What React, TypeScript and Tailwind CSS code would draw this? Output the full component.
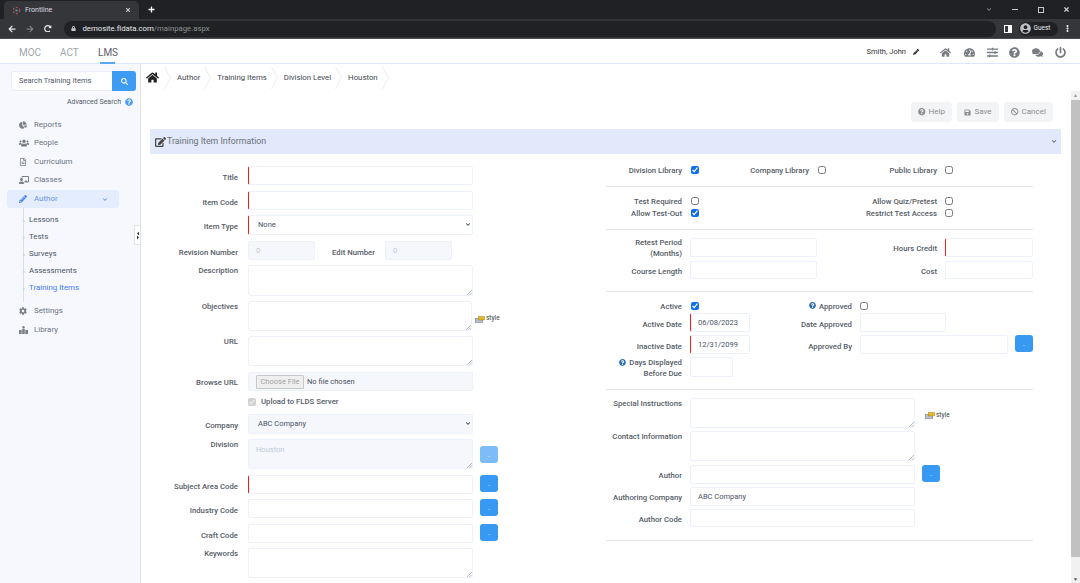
import React from "react";
import {
  FaHome, FaTachometerAlt, FaSlidersH, FaQuestionCircle, FaComments, FaPowerOff, FaChartPie, FaUsers,
  FaRegFileAlt, FaChalkboardTeacher, FaPencilAlt, FaCog, FaEdit, FaSave, FaBan, FaSearch,
  FaChevronDown, FaLock, FaArrowLeft, FaArrowRight, FaRedoAlt, FaUserCircle, FaTimes, FaPlus, FaEllipsisV,
} from "react-icons/fa";

const font = "font-['Roboto','Liberation_Sans',sans-serif]";

function Grip() {
  return (
    <svg className="absolute right-[1px] bottom-[1px] w-[5px] h-[5px]" viewBox="0 0 5 5">
      <path d="M0 5L5 0M2.5 5L5 2.5" stroke="#8a8f98" strokeWidth="0.6" />
    </svg>
  );
}

function Input({ w, req, disabled, value, cls = "" }: { w: string; req?: boolean; disabled?: boolean; value?: string; cls?: string }) {
  return (
    <input
      readOnly
      value={value ?? ""}
      className={`${w} h-full shrink-0 box-border rounded-[2px] border border-[#edf1fb] ${req ? "border-l-[#f01c1c]" : ""} ${disabled ? "bg-[#f5f7fd] text-[#c3c9d6] border-[#e8edf9]" : "bg-white text-[#4a5366]"} px-[7px] text-[7.5px] outline-none ${cls}`}
    />
  );
}

function Area({ w = "w-[225px]", value, disabled }: { w?: string; value?: string; disabled?: boolean }) {
  return (
    <div className={`relative ${w} h-full shrink-0`}>
      <textarea
        readOnly
        value={value ?? ""}
        className={`block w-full h-full box-border resize-none rounded-[2px] border border-[#edf1fb] ${disabled ? "bg-[#f5f7fd] text-[#c3c9d6]" : "bg-white"} px-[7px] py-[4px] text-[7.5px] outline-none`}
      />
      <Grip />
    </div>
  );
}

function Dots({ faded, cls = "" }: { faded?: boolean; cls?: string }) {
  return (
    <button className={`block self-start shrink-0 w-[18px] h-[17px] rounded-[3px] ${faded ? "bg-[#7dbcf7]" : "bg-[#3899f2]"} text-white text-[6px] leading-[17px] text-center ${cls}`}>..</button>
  );
}

function Lbl({ children, w = "w-[88px]", top, cls = "" }: { children: React.ReactNode; w?: string; top?: boolean; cls?: string }) {
  return (
    <label className={`${w} shrink-0 text-right text-[7.75px] leading-[11px] font-medium text-[#565c66] ${top ? "self-start" : ""} ${cls}`}>
      {children}
    </label>
  );
}

function StyleLink({ cls = "" }: { cls?: string }) {
  return (
    <span className={`flex items-center gap-[1px] text-[6.5px] text-[#3b3b3b] ${cls}`}>
      <svg className="w-[10px] h-[7px]" viewBox="0 0 10 7">
        <rect x="0.5" y="2.5" width="7" height="4.5" fill="#b9c2cc" stroke="#5f6b78" strokeWidth="0.5" />
        <rect x="3.5" y="0.5" width="6" height="3.5" fill="#e5b92c" stroke="#8a6d10" strokeWidth="0.4" />
      </svg>
      style
    </span>
  );
}

function Check({ checked, disabled }: { checked?: boolean; disabled?: boolean }) {
  return (
    <input
      type="checkbox"
      readOnly
      checked={!!checked}
      disabled={disabled}
      className="w-[8px] h-[8px] m-0 accent-[#0f6fe8]"
    />
  );
}

function Help({ cls = "" }: { cls?: string }) {
  return <FaQuestionCircle className={`inline text-[#2f6fb5] w-[7px] h-[7px] ${cls}`} />;
}

function Divider({ cls }: { cls: string }) {
  return <hr className={`border-0 h-[1px] bg-[#e3e4e6] ${cls}`} />;
}

function Row({ cls, children }: { cls: string; children: React.ReactNode }) {
  return <div className={`flex items-center ${cls}`}>{children}</div>;
}

function LeftForm() {
  const g = "gap-[10px] ";
  return (
    <div className="w-[350px] shrink-0">
      <Row cls={g + "h-[19px]"}><Lbl cls="pt-[3px]">Title</Lbl><Input w="w-[225px]" req /></Row>
      <Row cls={g + "h-[19px] mt-[6px]"}><Lbl cls="pt-[3px]">Item Code</Lbl><Input w="w-[225px]" req /></Row>
      <Row cls={g + "h-[20px] mt-[5px]"}>
        <Lbl cls="pt-[3px]">Item Type</Lbl>
        <div className="relative w-[225px] h-full">
          <select className="block w-full h-full box-border appearance-none rounded-[2px] border border-[#edf1fb] border-l-[#f01c1c] bg-white px-[9px] text-[7.5px] text-[#4a5366] outline-none"><option>None</option></select>
          <FaChevronDown className="absolute right-[2px] top-[7px] w-[6px] h-[5px] text-[#2d3a55]" />
        </div>
      </Row>
      <Row cls={g + "h-[19px] mt-[6px]"}>
        <Lbl cls="pt-[3px]">Revision Number</Lbl>
        <Input w="w-[67px]" disabled value="0" />
        <Lbl w="w-[43px]" cls="pt-[3px] ml-[7px] whitespace-nowrap">Edit Number</Lbl>
        <Input w="w-[67px]" disabled value="0" />
      </Row>
      <Row cls={g + "h-[31px] mt-[5px]"}><Lbl top>Description</Lbl><Area /></Row>
      <Row cls={g + "h-[30px] mt-[5px]"}>
        <Lbl top>Objectives</Lbl>
        <Area w="w-[224px]" />
        <StyleLink cls="-ml-[7px] pt-[6px]" />
      </Row>
      <Row cls={g + "h-[30px] mt-[5px]"}><Lbl top>URL</Lbl><Area /></Row>
      <Row cls={g + "h-[19px] mt-[6px]"}>
        <Lbl cls="pt-[2px]">Browse URL</Lbl>
        <div className="w-[225px] h-full box-border rounded-[2px] border border-[#edf1fb] bg-[#f5f7fd] pl-[7px] flex items-center text-[7.5px] text-[#4a4f59]">
          <span className="h-[14px] w-[48px] box-border border border-[#c9c9c9] rounded-[1px] bg-[#efefef] text-[#a3a3a3] text-center leading-[12px]">Choose File</span>
          <span className="ml-[3px]">No file chosen</span>
        </div>
      </Row>
      <Row cls={g + "h-[12px] mt-[5px]"}>
        <span className="w-[88px]" />
        <span className="flex items-center gap-[5px] text-[7.75px] font-medium text-[#565c66]">
          <Check checked disabled /> Upload to FLDS Server
        </span>
      </Row>
      <Row cls={g + "h-[20px] mt-[6px]"}>
        <Lbl cls="pt-[3px]">Company</Lbl>
        <div className="relative w-[225px] h-full">
          <select className="block w-full h-full box-border appearance-none rounded-[2px] border border-[#edf1fb] bg-[#f5f7fd] px-[9px] text-[7.5px] text-[#4a5366] outline-none"><option>ABC Company</option></select>
          <FaChevronDown className="absolute right-[2px] top-[7px] w-[6px] h-[5px] text-[#2d3a55]" />
        </div>
      </Row>
      <Row cls={g + "h-[30px] mt-[5px]"}>
        <Lbl top>Division</Lbl>
        <Area value="Houston" disabled />
        <Dots faded cls="-ml-[3px] mt-[7px]" />
      </Row>
      <Row cls={g + "h-[19px] mt-[6px]"}><Lbl cls="pt-[3px]">Subject Area Code</Lbl><Input w="w-[225px]" req /><Dots cls="-ml-[3px]" /></Row>
      <Row cls={g + "h-[19px] mt-[5px]"}><Lbl cls="pt-[3px]">Industry Code</Lbl><Input w="w-[225px]" /><Dots cls="-ml-[3px]" /></Row>
      <Row cls={g + "h-[19px] mt-[6px]"}><Lbl cls="pt-[3px]">Craft Code</Lbl><Input w="w-[225px]" /><Dots cls="-ml-[3px]" /></Row>
      <Row cls={g + "h-[30px] mt-[5px]"}><Lbl top>Keywords</Lbl><Area /></Row>
    </div>
  );
}

function RightForm() {
  const Gap = () => <span className="w-[8px] shrink-0" />;
  return (
    <div className="w-[427px] ml-[106px] shrink-0">
      <Row cls="h-[10px] mt-[-1px]">
        <Lbl w="w-[76px]">Division Library</Lbl>
        <span className="ml-[9px] flex"><Check checked /></span>
        <Lbl w="w-[110px]">Company Library</Lbl>
        <span className="ml-[9px] flex"><Check /></span>
        <Lbl w="w-[111px]">Public Library</Lbl>
        <span className="ml-[8px] flex"><Check /></span>
      </Row>
      <Divider cls="mt-[11px]" />
      <Row cls="h-[10px] mt-[9px]">
        <Lbl w="w-[76px]">Test Required</Lbl>
        <span className="ml-[9px] flex"><Check /></span>
        <Lbl w="w-[238px]">Allow Quiz/Pretest</Lbl>
        <span className="ml-[8px] flex"><Check /></span>
      </Row>
      <Row cls="h-[10px] mt-[2px]">
        <Lbl w="w-[76px]">Allow Test-Out</Lbl>
        <span className="ml-[9px] flex"><Check checked /></span>
        <Lbl w="w-[238px]">Restrict Test Access</Lbl>
        <span className="ml-[8px] flex"><Check /></span>
      </Row>
      <Divider cls="mt-[11px]" />
      <Row cls="h-[19px] mt-[8px]">
        <Lbl w="w-[76px]" cls="pt-[1px]">Retest Period (Months)</Lbl>
        <Gap />
        <Input w="w-[127px]" />
        <Lbl w="w-[120px]" cls="pt-[2px]">Hours Credit</Lbl>
        <Gap />
        <Input w="w-[88px]" req />
      </Row>
      <Row cls="h-[18px] mt-[4px]">
        <Lbl w="w-[76px]" cls="pt-[2px]">Course Length</Lbl>
        <Gap />
        <Input w="w-[127px]" />
        <Lbl w="w-[120px]" cls="pt-[2px]">Cost</Lbl>
        <Gap />
        <Input w="w-[88px]" />
      </Row>
      <Divider cls="mt-[12px]" />
      <Row cls="h-[10px] mt-[9px]">
        <Lbl w="w-[76px]">Active</Lbl>
        <span className="ml-[9px] flex"><Check checked /></span>
        <Lbl w="w-[153px]"><Help cls="mr-[3px] align-[-0.5px]" />Approved</Lbl>
        <span className="ml-[8px] flex"><Check /></span>
      </Row>
      <Row cls="h-[19px] mt-[2px]">
        <Lbl w="w-[76px]" cls="pt-[3px]">Active Date</Lbl>
        <Gap />
        <Input w="w-[60px]" req value="06/08/2023" />
        <Lbl w="w-[102px]" cls="pt-[3px]">Date Approved</Lbl>
        <Gap />
        <Input w="w-[86px]" />
      </Row>
      <Row cls="h-[19px] mt-[3px]">
        <Lbl w="w-[76px]" cls="pt-[3px]">Inactive Date</Lbl>
        <Gap />
        <Input w="w-[60px]" req value="12/31/2099" />
        <Lbl w="w-[102px]" cls="pt-[3px]">Approved By</Lbl>
        <Gap />
        <Input w="w-[148px]" />
        <Dots cls="ml-[7px]" />
      </Row>
      <Row cls="h-[20px] mt-[3px]">
        <Lbl w="w-[76px]" cls="pt-[2px]"><Help cls="mr-[3px] align-[-0.5px]" />Days Displayed Before Due</Lbl>
        <Gap />
        <Input w="w-[43px]" />
      </Row>
      <Divider cls="mt-[12px]" />
      <Row cls="h-[30px] mt-[8px]">
        <Lbl w="w-[76px]" top>Special Instructions</Lbl>
        <Gap />
        <Area />
        <StyleLink cls="ml-[10px] pt-[5px]" />
      </Row>
      <Row cls="h-[30px] mt-[3px]">
        <Lbl w="w-[76px]" top>Contact Information</Lbl>
        <Gap />
        <Area />
      </Row>
      <Row cls="h-[19px] mt-[4px]">
        <Lbl w="w-[76px]" cls="pt-[2px]">Author</Lbl>
        <Gap />
        <Input w="w-[225px]" />
        <Dots cls="ml-[7px]" />
      </Row>
      <Row cls="h-[19px] mt-[3px]">
        <Lbl w="w-[76px]" cls="pt-[2px]">Authoring Company</Lbl>
        <Gap />
        <Input w="w-[225px]" value="ABC Company" />
      </Row>
      <Row cls="h-[18px] mt-[3px]">
        <Lbl w="w-[76px]" cls="pt-[3px]">Author Code</Lbl>
        <Gap />
        <Input w="w-[225px]" />
      </Row>
      <Divider cls="mt-[13px]" />
    </div>
  );
}

function SideItem({ icon, label, cls = "" }: { icon: React.ReactNode; label: string; cls?: string }) {
  return (
    <div className={`flex items-center h-[18.5px] pl-[19px] text-[7.9px] text-[#6b7280] ${cls}`}>
      <span className="w-[15px] flex">{icon}</span>
      {label}
    </div>
  );
}

function SubItem({ label, active }: { label: string; active?: boolean }) {
  return (
    <div className={`flex items-center h-[17px] text-[7.9px] ${active ? "text-[#3f7cf5]" : "text-[#4b5563]"}`}>
      <span className="w-[6px] text-[6px] text-[#9db4d8] -ml-[1px]">›</span>
      {label}
    </div>
  );
}

function Chev() {
  return (
    <svg className="absolute right-[-3px] top-[2.5px] w-[7px] h-[22px]" viewBox="0 0 7 22" fill="none">
      <path d="M0.5 0L6.5 11L0.5 22" stroke="#e8e8e8" strokeWidth="0.8" />
    </svg>
  );
}

function Crumb({ label }: { label: string }) {
  return (
    <span className="relative flex items-center h-[27px] pl-[9px] pr-[8px] text-[7.8px] text-[#3f4650]">
      {label}
      <Chev />
    </span>
  );
}

function ActionBtn({ icon, label, cls }: { icon: React.ReactNode; label: string; cls: string }) {
  return (
    <span className={`flex items-center justify-center gap-[3px] h-[20px] rounded-[3px] bg-[#f3f4f6] text-[8px] text-[#8d8d8d] ${cls}`}>
      {icon}{label}
    </span>
  );
}

export default function App() {
  const ic = "w-[8px] h-[8px] text-[#7b8088]";
  const icw = "w-[10px] h-[8px] text-[#7b8088]";
  const hd = "w-[11px] h-[11px] text-[#777c83]";
  return (
    <div className={`w-[1080px] h-[583px] overflow-hidden flex flex-col bg-white ${font}`}>
      {/* browser chrome */}
      <div className="h-[19px] bg-[#202124] flex items-end shrink-0 relative text-[#dadce0]">
        <div className="ml-[4px] w-[135px] h-[18px] bg-[#35363a] rounded-t-[5px] flex items-center px-[8px] text-[7px]">
          <svg className="w-[9px] h-[9px] mr-[4px]" viewBox="0 0 9 9">
            <circle cx="4.5" cy="4.5" r="3.2" fill="none" stroke="#a0524d" strokeWidth="1.2" strokeDasharray="2 1.5" />
            <circle cx="4.5" cy="4.5" r="1.2" fill="#4a7fa8" />
          </svg>
          <span className="flex-1">Frontline</span>
          <FaTimes className="w-[6px] h-[6px] text-[#c7c9cc]" />
        </div>
        <FaPlus className="w-[7px] h-[7px] text-white ml-[9px] mb-[6px]" />
        <div className="ml-auto flex items-center h-[19px] text-[#b9bbbe]">
          <FaChevronDown className="w-[6px] h-[5px] mr-[20px] text-[#8e9094]" />
          <span className="w-[6px] h-[1px] bg-[#c7c9cc] mr-[20px]" />
          <span className="w-[6px] h-[6px] border border-[#c7c9cc] mr-[19px]" />
          <FaTimes className="w-[7px] h-[7px] mr-[10px] text-[#c7c9cc]" />
        </div>
      </div>
      <div className="h-[20px] bg-[#35363a] border-b border-[#4a4b4e] flex items-center shrink-0 text-[#dadce0] box-border">
        <FaArrowLeft className="w-[8px] h-[8px] ml-[8px] text-[#e8eaed]" />
        <FaArrowRight className="w-[8px] h-[8px] ml-[10px] text-[#7c7e82]" />
        <FaRedoAlt className="w-[7.5px] h-[7.5px] ml-[10px] text-[#e8eaed]" />
        <div className="ml-[12px] w-[932px] h-[16px] rounded-full bg-[#202124] flex items-center text-[7.75px] pl-[7px]">
          <FaLock className="w-[5px] h-[5px] text-[#c7c9cc] mr-[7px]" />
          <span className="text-[#e8eaed]">demosite.fldata.com</span>
          <span className="text-[#8f9194]">/mainpage.aspx</span>
        </div>
        <span className="ml-[8px] w-[8px] h-[8px] border border-white border-r-[4px] box-border" />
        <div className="ml-[7px] w-[39px] h-[14px] rounded-full bg-[#202124] flex items-center pl-[1px] gap-[3px] text-[6.5px] text-[#e8eaed]">
          <FaUserCircle className="w-[11px] h-[11px] text-[#bdc1c6]" />Guest
        </div>
        <FaEllipsisV className="w-[7px] h-[7px] ml-[6px] text-[#e8eaed]" />
      </div>

      {/* app header */}
      <div className="h-[25px] shrink-0 flex items-center border-b border-[#dde6fb] box-border bg-white">
        <div className="flex text-[10px] text-[#a2a6ac] pl-[19px] h-full items-center">
          <span className="w-[41px] pt-[2px]">MOC</span>
          <span className="w-[38px] pt-[2px]">ACT</span>
          <span className="relative text-[#5b6068] h-full flex items-center pt-[2px]">LMS
            <span className="absolute left-[2px] right-[3px] -bottom-[1px] h-[2px] bg-[#59a8f2]" />
          </span>
        </div>
        <div className="ml-auto flex items-center pr-[14px] pt-[2px]">
          <span className="text-[7.5px] text-[#333] mr-[6.5px]">Smith, John</span>
          <FaPencilAlt className="w-[6px] h-[6px] text-[#222] mr-[21px]" />
          <FaHome className={`${hd} mr-[13px]`} />
          <FaTachometerAlt className={`${hd} mr-[12px]`} />
          <FaSlidersH className={`${hd} mr-[11.5px]`} />
          <FaQuestionCircle className={`${hd} mr-[11.5px]`} />
          <FaComments className={`${hd} mr-[12.5px]`} />
          <FaPowerOff className={hd} />
        </div>
      </div>

      <div className="flex flex-1 min-h-0">
        {/* sidebar */}
        <aside className="relative w-[141px] shrink-0 bg-[#f6f8fe] border-r border-[#dfe1e5] box-border">
          <div className="flex ml-[11px] mt-[7px] w-[125px] h-[20px]">
            <div className="flex-1 bg-white border border-[#e8edf9] border-r-0 rounded-l-[3px] text-[7.5px] text-[#4b5563] flex items-center pl-[7px]">Search Training Items</div>
            <div className="w-[24px] bg-[#3d9bf3] rounded-r-[3px] flex items-center justify-center">
              <FaSearch className="w-[7px] h-[7px] text-white" />
            </div>
          </div>
          <div className="mt-[6px] pr-[7px] flex items-center justify-end text-[7px] text-[#565c66] h-[10px]">
            Advanced Search
            <FaQuestionCircle className="ml-[4px] w-[8px] h-[8px] text-[#4b9bf0]" />
          </div>
          <div className="mt-[8.5px]">
            <SideItem icon={<FaChartPie className={ic} />} label="Reports" />
            <SideItem icon={<FaUsers className={icw} />} label="People" />
            <SideItem icon={<FaRegFileAlt className={ic} />} label="Curriculum" />
            <SideItem icon={<FaChalkboardTeacher className={icw} />} label="Classes" />
            <div className="ml-[7px] mt-[0.5px] w-[112px] h-[18px] rounded-[3px] bg-[#e4edfd] flex items-center pl-[12px] pr-[11px] text-[7.9px] text-[#6b93e0]">
              <FaPencilAlt className="w-[8px] h-[8px] text-[#4b84e8] mr-[7px]" />
              Author
              <FaChevronDown className="ml-auto w-[6px] h-[5px] text-[#6b93e0]" />
            </div>
            <div className="ml-[23px] border-l border-[#d9dee8] pt-[3px] pb-[6px] flex flex-col w-[100px]">
              <SubItem label="Lessons" />
              <SubItem label="Tests" />
              <SubItem label="Surveys" />
              <SubItem label="Assessments" />
              <SubItem label="Training Items" active />
            </div>
            <SideItem icon={<FaCog className={ic} />} label="Settings" />
            <SideItem
              icon={
                <svg className="w-[9px] h-[8px] text-[#7b8088]" viewBox="0 0 9 8" fill="currentColor">
                  <circle cx="4.5" cy="1.2" r="1.2" />
                  <rect x="3.2" y="2.8" width="2.6" height="5.2" />
                  <rect x="0" y="4" width="2.7" height="4" />
                  <rect x="6.3" y="4" width="2.7" height="4" />
                </svg>
              }
              label="Library"
            />
          </div>
          <div className="absolute right-0 top-[161px] w-[6px] h-[20px] bg-white border border-[#e3e5e9] border-r-0 flex items-center justify-center">
            <svg className="w-[4px] h-[9px]" viewBox="0 0 4 9" fill="#333">
              <path d="M3 0.5L1 2.5L3 4.5Z" />
              <path d="M1 4.5L3 6.5L1 8.5Z" />
            </svg>
          </div>
        </aside>

        {/* main */}
        <main className="flex-1 min-w-0 flex flex-col">
          <div className="h-[27px] shrink-0 flex items-center pl-[5px]">
            <span className="relative flex items-center h-[27px] pr-[9px]">
              <FaHome className="w-[13px] h-[13px] text-[#222] -mt-[1px]" />
              <Chev />
            </span>
            <div className="flex pt-[1px]">
              <Crumb label="Author" />
              <Crumb label="Training Items" />
              <Crumb label="Division Level" />
              <Crumb label="Houston" />
            </div>
          </div>
          <div className="flex-1 min-h-0 flex">
            <div className="flex-1 min-w-0 pl-[9px] pr-[10px]">
              <div className="flex justify-end gap-[5px] mt-[11px] pr-[8px]">
                <ActionBtn cls="w-[41px]" icon={<FaQuestionCircle className="w-[7.5px] h-[7.5px]" />} label="Help" />
                <ActionBtn cls="w-[42px]" icon={<FaSave className="w-[7px] h-[7px]" />} label="Save" />
                <ActionBtn cls="w-[49px]" icon={<FaBan className="w-[7.5px] h-[7.5px]" />} label="Cancel" />
              </div>
              <div className="mt-[7px] h-[25px] bg-[#e1e9fb] flex items-center pl-[5px] pr-[4px] text-[8.8px] text-[#6b7078]">
                <FaEdit className="w-[11px] h-[10px] text-[#444] mr-[1px]" />
                Training Item Information
                <FaChevronDown className="ml-auto w-[6px] h-[5px] text-[#555]" />
              </div>
              <div className="flex mt-[12px]">
                <LeftForm />
                <RightForm />
              </div>
            </div>
            {/* scrollbar */}
            <div className="w-[9px] shrink-0 bg-[#f1f1f1] flex flex-col items-center">
              <span className="h-[9px] text-[5px] leading-[9px] text-[#999]">▲</span>
              <span className="w-full h-[457px] bg-[#c1c1c1]" />
              <span className="mt-auto h-[8px] text-[5px] leading-[8px] text-[#505050]">▼</span>
            </div>
          </div>
        </main>
      </div>
    </div>
  );
}
